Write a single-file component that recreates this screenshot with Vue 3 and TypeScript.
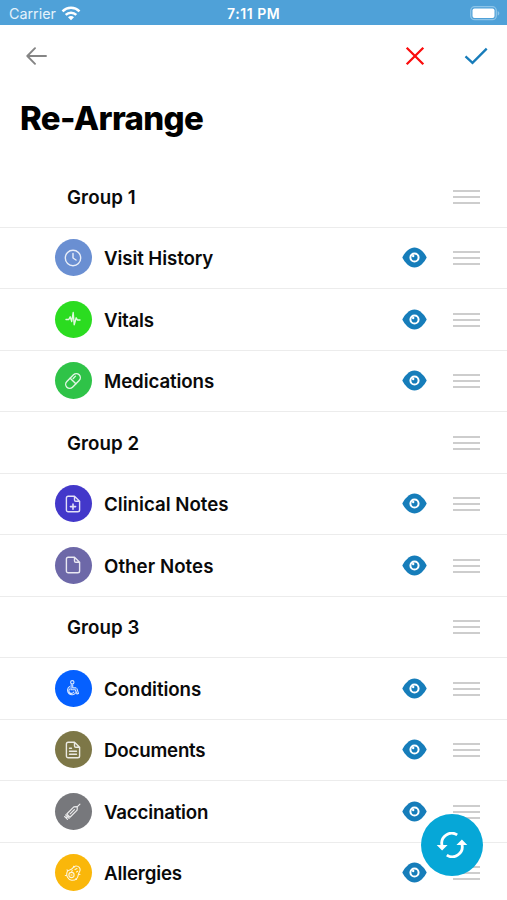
<script setup lang="ts">
type IconName = 'clock' | 'pulse' | 'pill' | 'note-plus' | 'note' | 'wheelchair' | 'document' | 'syringe' | 'allergy'

interface Row {
  label: string
  icon?: IconName
  color?: string
  tracking: number
}

const rows: Row[] = [
  { label: 'Group 1', tracking: 0.1 },
  { label: 'Visit History', icon: 'clock', color: '#6a8fd2', tracking: -0.1 },
  { label: 'Vitals', icon: 'pulse', color: '#2bdc20', tracking: -0.2 },
  { label: 'Medications', icon: 'pill', color: '#2fc348', tracking: -0.1 },
  { label: 'Group 2', tracking: 0.05 },
  { label: 'Clinical Notes', icon: 'note-plus', color: '#4338ca', tracking: 0 },
  { label: 'Other Notes', icon: 'note', color: '#6d68a8', tracking: 0.05 },
  { label: 'Group 3', tracking: 0.05 },
  { label: 'Conditions', icon: 'wheelchair', color: '#0560ff', tracking: -0.05 },
  { label: 'Documents', icon: 'document', color: '#7d7747', tracking: -0.2 },
  { label: 'Vaccination', icon: 'syringe', color: '#77787c', tracking: -0.2 },
  { label: 'Allergies', icon: 'allergy', color: '#fab70a', tracking: -0.15 },
]
</script>

<template>
  <div class="screen">
    <header class="status">
      <span class="carrier">Carrier</span>
      <svg class="wifi" width="20" height="15" viewBox="0 0 20 15" fill="none" stroke="#fff" stroke-width="2.5">
        <path d="M1.5 5.3a12.2 12.2 0 0 1 17 0" />
        <path d="M4.7 8.8a7.6 7.6 0 0 1 10.6 0" />
        <path d="M10 14.2l-3-3a4.2 4.2 0 0 1 6 0z" fill="#fff" stroke="none" />
      </svg>
      <span class="time">7:11 PM</span>
      <svg class="battery" width="30" height="15" viewBox="0 0 30 15">
        <rect x=".7" y=".7" width="25.6" height="13" rx="4" fill="none" stroke="#8cc4e8" stroke-width="1.3" />
        <rect x="2.5" y="2.5" width="22" height="9.4" rx="2" fill="#fff" />
        <path d="M27.7 5v4.6c1-.4 1.6-1.300 1.600-2.300s-.6-1.900-1.600-2.300z" fill="#8cc4e8" />
      </svg>
    </header>

    <nav class="toolbar">
      <svg class="back" width="22" height="18" viewBox="0 0 22 18" fill="none" stroke="#858585" stroke-width="1.9" stroke-linecap="round" stroke-linejoin="round">
        <path d="M20 9H1.500M9 1.200L1.300 9 9 16.800" />
      </svg>
      <svg class="cancel" width="20" height="20" viewBox="0 0 20 20" fill="none" stroke="#fb0d0d" stroke-width="2.300">
        <path d="M1.700 1.700l16.600 16.600M18.300 1.700L1.700 18.300" />
      </svg>
      <svg class="confirm" width="24" height="18" viewBox="0 0 24 18" fill="none" stroke="#177cba" stroke-width="2.300">
        <path d="M1.500 9.300l7 6.600L22.700 1.600" />
      </svg>
    </nav>

    <h1 class="title">Re-Arrange</h1>

    <ul class="list">
      <li v-for="row in rows" :key="row.label" class="row" :class="{ group: !row.icon }">
        <span v-if="row.icon" class="badge" :style="{ backgroundColor: row.color }">
          <svg class="glyph" width="18" height="18" viewBox="0 0 18 18" fill="none" stroke="#fff" stroke-width="1.400" stroke-linecap="round" stroke-linejoin="round">
            <g v-if="row.icon === 'clock'">
              <circle cx="9" cy="9" r="7.700" />
              <path d="M9 4.500V9l3 2" />
            </g>
            <path v-else-if="row.icon === 'pulse'" d="M2 9.500h2.800l1.400-2.700 1.500 4.700L9.200 2.500l1 12.300 2-7 1.200 2.200H16" />
            <g v-else-if="row.icon === 'pill'" transform="rotate(-45 9 9)">
              <rect x="0.300" y="5" width="17.400" height="8" rx="4" />
              <path d="M9 5v8M11 7.300h3.200" />
            </g>
            <g v-else-if="row.icon === 'note-plus' || row.icon === 'note' || row.icon === 'document'">
              <path d="M10.500 1.200H4.200A1.800 1.800 0 0 0 2.400 3v12a1.800 1.800 0 0 0 1.800 1.800h9.600a1.800 1.800 0 0 0 1.800-1.800V6.300zV5a1.300 1.300 0 0 0 1.300 1.300h3.800" />
              <path v-if="row.icon === 'note-plus'" d="M9 9v5.200M6.400 11.600h5.200" stroke-width="1.600" />
              <path v-if="row.icon === 'document'" d="M5.500 7.200h2M5.500 10.200h7M5.500 13.200h7" />
            </g>
            <g v-else-if="row.icon === 'wheelchair'" stroke-width="1.100" transform="translate(-1 0)">
              <circle cx="9.300" cy="3.300" r="1.700" />
              <path d="M8.200 5.500L8 10.700h4.300l1.700 4.300 1.500-.6-1.500-4.600M9.700 5.800v3.100h3.200" />
              <path d="M6.500 7.600a4.500 4.500 0 1 0 6.300 6.200M6.600 10a2.600 2.600 0 1 0 4.200 3" />
            </g>
            <g v-else-if="row.icon === 'syringe'" transform="rotate(-45 9 9)" stroke-width="1.200">
              <path d="M2.500 6.700h10l2 1.700v1.200l-2 1.700h-10zM14.500 9h4.300M2.500 9H-.5M-.8 7v4M1 6.500v5M5 9h6" />
            </g>
            <g v-else stroke-width="1.100">
              <path d="M3.300 7.500c1-1.600 2.600-1.300 4.100-2.200C9 4.300 9.600 2.100 12 2c2.800-.1 4.600 2.200 4 4.600-.4 1.600-1.500 2-1.700 4.100-.4 3.600-3.100 5.700-6.600 5.500-3.500-.2-6.200-4.700-4.400-8.700z" />
              <circle cx="7.500" cy="11" r="2.600" />
              <path d="M11 5.500l2-1M12.500 8l1.200-.7M7.500 7.300l1-.5M3 5.800l.8.900M9.500 2.300l.6.900M16 10.500l-1.300-.3M12.500 15.500l-.6-.9M1.300 11.500h1.200" />
              <path d="M7 11h1" />
            </g>
          </svg>
        </span>
        <span class="label" :style="{ letterSpacing: row.tracking + 'px' }">{{ row.label }}</span>
        <svg v-if="row.icon" class="eye" width="25" height="21" viewBox="0 0 25 21">
          <path d="M.3 10.500C2.600 5.500 7.500.500 12.500.500s9.900 5 12.200 10c-2.300 5-7.200 10-12.200 10S2.600 15.500.300 10.500z" fill="#167dba" />
          <circle cx="12.500" cy="10.500" r="4.100" fill="#167dba" stroke="#fff" stroke-width="2" />
          <circle cx="11.200" cy="9" r="1.200" fill="#fff" />
        </svg>
        <span class="handle"><i /><i /><i /></span>
      </li>
    </ul>

    <button class="refresh" aria-label="Refresh">
      <svg width="32" height="26" viewBox="0 0 32 26" fill="none" stroke="#fff" stroke-width="2.800">
        <path d="M21.200 2.900A10 10 0 0 0 6 13.500" />
        <path d="M10.800 23.100A10 10 0 0 0 26 12.500" />
        <path d="M.7 13h10.900L6.100 18.500zM20.400 13h10.900l-5.400-5.500z" fill="#fff" stroke="none" />
      </svg>
    </button>
  </div>
</template>

<style>
body {
  margin: 0;
  background: #fff;
}
</style>

<style scoped>
.screen {
  position: relative;
  width: 507px;
  height: 900px;
  overflow: hidden;
  background: #fff;
  color: #0a0a0a;
  font-family: Inter, "Liberation Sans", sans-serif;
}
.status {
  display: grid;
  grid-template-columns: 48px 165px 1fr 30px;
  align-items: center;
  box-sizing: border-box;
  height: 25px;
  padding: 2px 7px 0 9px;
  background: #4fa1d8;
  color: #fff;
}
.carrier {
  font-size: 14.300px;
  color: #e5f2fb;
}
.wifi {
  margin-left: 4px;
}
.time {
  margin-left: 5px;
  font-size: 14px;
  font-weight: 600;
  letter-spacing: .55px;
  white-space: nowrap;
}
.battery {
  grid-column: 4;
}
.toolbar {
  display: flex;
  align-items: center;
  height: 62px;
  padding: 0 19px 0 26px;
}
.cancel {
  margin-left: auto;
  margin-right: 39px;
}
.title {
  margin: 9px 0 0 20px;
  height: 44px;
  line-height: 44px;
  font-size: 33px;
  font-weight: 800;
  letter-spacing: -.65px;
  white-space: nowrap;
  width: max-content;
  color: #000;
}
.list {
  margin: 26px 0 0;
  padding: 0;
  list-style: none;
}
.row {
  display: flex;
  align-items: center;
  box-sizing: border-box;
  height: 61.500px;
  padding: 0 27px 0 54.500px;
  border-bottom: 1.500px solid #ececec;
}
.row.group {
  padding-left: 67px;
}
.badge {
  display: flex;
  align-items: center;
  justify-content: center;
  width: 37px;
  height: 37px;
  margin-right: 12.500px;
  border-radius: 50%;
}
.glyph {
  opacity: .85;
  overflow: visible;
}
.label {
  padding-top: 2px;
  font-size: 18.700px;
  font-weight: 600;
  white-space: nowrap;
}
.eye {
  margin-left: auto;
  margin-right: 26px;
}
.handle {
  display: flex;
  flex-direction: column;
  gap: 4px;
  width: 27px;
  padding-top: 1px;
}
.group .handle {
  margin-left: auto;
}
.handle i {
  height: 2px;
  background: #cdcdcd;
}
.refresh {
  position: absolute;
  left: 421px;
  top: 814px;
  display: flex;
  align-items: center;
  justify-content: center;
  width: 62px;
  height: 62px;
  padding: 0;
  border: 0;
  border-radius: 50%;
  background: #06a7d7;
}
</style>
